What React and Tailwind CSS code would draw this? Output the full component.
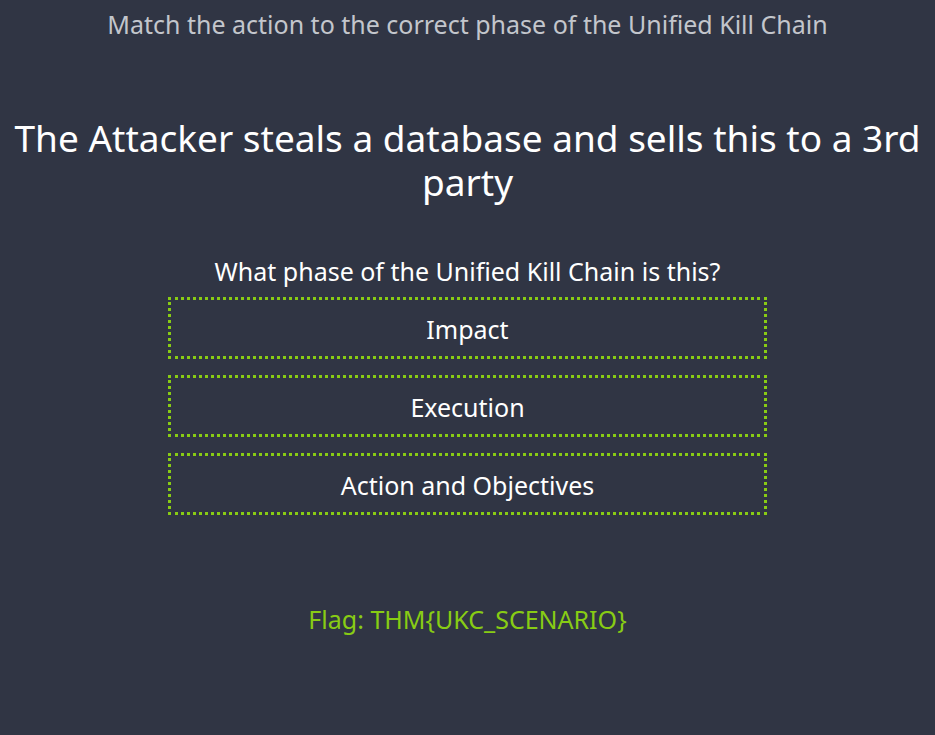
import React from 'react';

const options = ['Impact', 'Execution', 'Action and Objectives'];

export default function App() {
  return (
    <div className="min-h-[735px] w-full bg-[#303544] text-white flex flex-col items-center" style={{ fontFamily: '"Noto Sans", "Open Sans", sans-serif' }}>
      <div className="text-[25px] leading-[48px] text-[#c3c6cc]">Match the action to the correct phase of the Unified Kill Chain</div>
      <h1 className="mt-[68px] px-2 text-center text-[37px] leading-[44px] font-normal">
        The Attacker steals a database and sells this to a 3rd party
      </h1>
      <p className="mt-[50px] text-[25px] leading-[34px]">What phase of the Unified Kill Chain is this?</p>
      <div className="mt-[9px] flex flex-col gap-[16px]">
        {options.map(o => (
          <button key={o} type="button" className="w-[599px] h-[62px] pt-[3px] border-[3px] border-dotted border-[#88cc14] text-[25px] text-white">
            {o}
          </button>
        ))}
      </div>
      <div className="mt-[86px] text-[25px] text-[#88cc14]">Flag: THM{'{'}UKC_SCENARIO{'}'}</div>
    </div>
  );
}
